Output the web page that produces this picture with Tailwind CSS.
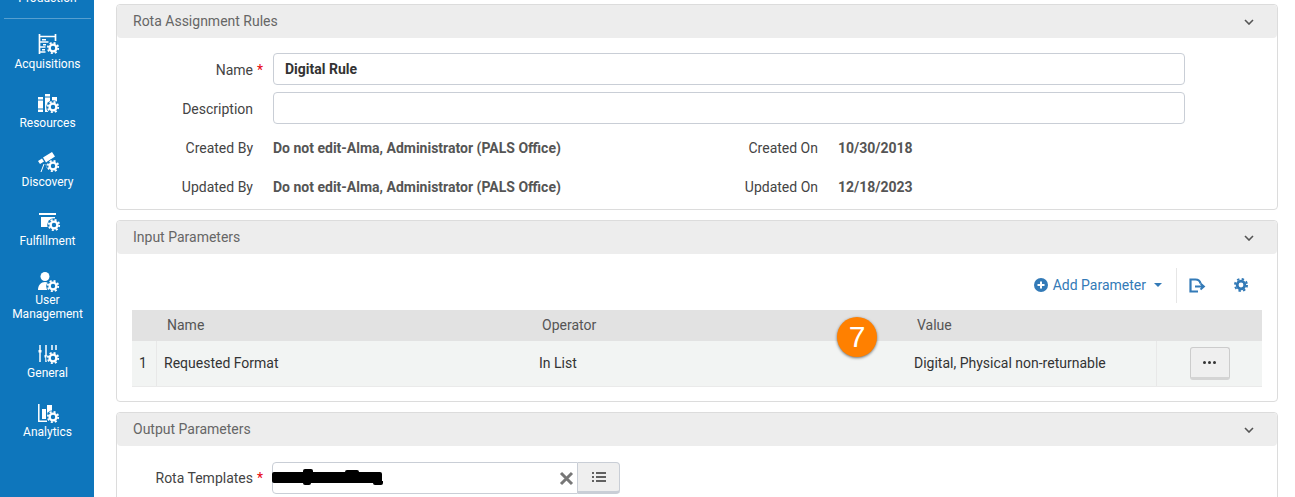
<!DOCTYPE html>
<html lang="en">
<head>
  <meta charset="UTF-8" />
  <meta name="viewport" content="width=device-width, initial-scale=1.0" />
  <title>Rota Assignment Rules</title>
  <script src="https://cdn.jsdelivr.net/npm/@tailwindcss/browser@4"></script>
</head>
<body class="bg-white text-[#333] font-['Roboto',sans-serif] text-[14px] overflow-hidden">

  <svg width="0" height="0" class="absolute">
    <defs>
      <g id="gear">
        <circle cx="15" cy="14" r="6.8" fill="#0e76bc" />
        <circle cx="15" cy="14" r="3.4" fill="none" stroke="#fff" stroke-width="2.4" />
        <circle cx="15" cy="14" r="5.2" fill="none" stroke="#fff" stroke-width="1.8" stroke-dasharray="2.04 2.04" />
      </g>
      <symbol id="chev" viewBox="0 0 10 6">
        <path d="M1 1l4 4 4-4" fill="none" stroke="#555" stroke-width="1.6" />
      </symbol>
    </defs>
  </svg>

  <div class="flex h-[497px] overflow-hidden">

    <!-- Sidebar -->
    <aside class="w-[94px] shrink-0 pl-[1px] bg-[#0e76bc] text-white text-[12px] leading-[14px] text-center overflow-hidden">
      <div class="mt-[-9px] h-[28px] border-b border-white/30 mx-[3px]">Production</div>

      <div class="h-[59px] mt-[15px] flex flex-col items-center">
        <div class="h-[20px] w-[20px]">
          <svg width="20" height="20" viewBox="0 0 20 20" class="overflow-visible">
            <path d="M1.500 0v20M17.500 0v7M1.500 2.500h16M1.500 8h9M1.500 13h6M1.500 18h6" stroke="#fff" stroke-width="1.700" fill="none" />
            <path d="M4 5h4v1.500H4zM5 10h3v1.500H5zM4 15h3v1.500H4z" fill="#fff" />
            <use href="#gear" />
          </svg>
        </div>
        <span class="mt-[3px]">Acquisitions</span>
      </div>

      <div class="h-[59px] flex flex-col items-center">
        <div class="h-[20px] w-[20px]">
          <svg width="20" height="20" viewBox="0 0 20 20" class="mt-[1px] overflow-visible">
            <path d="M0 3h5v15H0zM7 0h5v18H7zM14 3h5v8h-5z" fill="#fff" />
            <path d="M0 6h5M0 15h5M7 3h5" stroke="#0e76bc" stroke-width="1" />
            <use href="#gear" x="0" y="-1" />
          </svg>
        </div>
        <span class="mt-[3px]">Resources</span>
      </div>

      <div class="h-[59px] flex flex-col items-center">
        <div class="h-[20px] w-[20px]">
          <svg width="20" height="20" viewBox="0 0 20 20" class="overflow-visible">
            <path d="M0 9l4-2.500 2 3-4 2.500zM5 5.500l9-5.500 3 4.500-9 6z" fill="#fff" />
            <path d="M6 12L3 20M8 12l1 4" stroke="#fff" stroke-width="1" />
            <use href="#gear" x="0" y="0" />
          </svg>
        </div>
        <span class="mt-[3px]">Discovery</span>
      </div>

      <div class="h-[59px] flex flex-col items-center">
        <div class="h-[20px] w-[20px]">
          <svg width="20" height="20" viewBox="0 0 20 20" class="mt-[2px] overflow-visible">
            <path d="M1 1h17" stroke="#fff" stroke-width="2" />
            <path d="M3 4h14v10H3z" fill="#fff" />
            <use href="#gear" x="1" y="-2" />
          </svg>
        </div>
        <span class="mt-[3px]">Fulfillment</span>
      </div>

      <div class="h-[73px] flex flex-col items-center">
        <div class="h-[20px] w-[20px]">
          <svg width="20" height="21" viewBox="0 0 20 21" class="mt-[2px] overflow-visible">
            <circle cx="7" cy="4.500" r="4.500" fill="#fff" />
            <path d="M0 18c0-5 3-8 7-8s7 3 7 8z" fill="#fff" />
            <use href="#gear" x="0" y="0" />
          </svg>
        </div>
        <span class="mt-[3px]">User<br />Management</span>
      </div>

      <div class="h-[59px] flex flex-col items-center">
        <div class="h-[20px] w-[20px]">
          <svg width="20" height="20" viewBox="0 0 20 20" class="mt-[2px] overflow-visible">
            <path d="M2 0v17M8 0v17M14 0v5M18 0v5" stroke="#fff" stroke-width="1.500" />
            <path d="M.5 5h3v2.500h-3zM6.500 10h3v2.500h-3z" fill="#fff" />
            <use href="#gear" x="0" y="-1" />
          </svg>
        </div>
        <span class="mt-[3px]">General</span>
      </div>

      <div class="h-[59px] flex flex-col items-center">
        <div class="h-[20px] w-[20px]">
          <svg width="20" height="20" viewBox="0 0 20 20" class="mt-[2px] overflow-visible">
            <path d="M.8 0v17.200H9" fill="none" stroke="#fff" stroke-width="1.500" />
            <path d="M4 5h4v10H4zM9 1h5v9H9z" fill="#fff" />
            <use href="#gear" x="0" y="-1" />
          </svg>
        </div>
        <span class="mt-[3px]">Analytics</span>
      </div>
    </aside>

    <!-- Main -->
    <main class="w-[1162px] ml-[22px] pt-[4px] flex flex-col gap-[10px]">

      <!-- Rota Assignment Rules -->
      <section class="h-[206px] shrink-0 border border-[#dcdcdc] rounded-[4px]">
        <div class="h-[33px] bg-[#ededed] rounded-[4px] flex items-center justify-between pl-[16px] pr-[23px] text-[#666]">
          <span>Rota Assignment Rules</span>
          <svg width="10" height="6"><use href="#chev" /></svg>
        </div>
        <div class="pt-[15px]">
          <div class="flex items-center h-[32px]">
            <label class="w-[136px] pt-[2px] text-right text-[#444] relative">Name <span class="absolute left-[140px] text-red-600">*</span></label>
            <div class="ml-[20px] w-[912px] h-[32px] border border-[#c9ced6] rounded-[4px] px-[11px] flex items-center font-bold">Digital Rule</div>
          </div>
          <div class="flex items-center h-[32px] mt-[7px]">
            <label class="w-[136px] pt-[2px] text-right text-[#444]">Description</label>
            <div class="ml-[20px] w-[912px] h-[32px] border border-[#c9ced6] rounded-[4px]"></div>
          </div>
          <div class="flex items-center h-[20px] mt-[14px] text-[#444]">
            <span class="w-[136px] text-right">Created By</span>
            <span class="ml-[20px] w-[476px] font-bold text-[#555]">Do not edit-Alma, Administrator (PALS Office)</span>
            <span class="w-[69px] flex justify-end whitespace-nowrap">Created On</span>
            <span class="ml-[20px] font-bold text-[#555]">10/30/2018</span>
          </div>
          <div class="flex items-center h-[20px] mt-[19px] text-[#444]">
            <span class="w-[136px] text-right">Updated By</span>
            <span class="ml-[20px] w-[476px] font-bold text-[#555]">Do not edit-Alma, Administrator (PALS Office)</span>
            <span class="w-[69px] flex justify-end whitespace-nowrap">Updated On</span>
            <span class="ml-[20px] font-bold text-[#555]">12/18/2023</span>
          </div>
        </div>
      </section>

      <!-- Input Parameters -->
      <section class="h-[182px] shrink-0 border border-[#dcdcdc] rounded-[4px] relative">
        <div class="h-[33px] bg-[#ededed] rounded-[4px] flex items-center justify-between pl-[16px] pr-[23px] text-[#666]">
          <span>Input Parameters</span>
          <svg width="10" height="6"><use href="#chev" /></svg>
        </div>

        <div class="h-[56px] pt-[6px] flex items-center justify-end pr-[29px] text-[#337ab7]">
          <svg width="14" height="14" viewBox="0 0 14 14">
            <circle cx="7" cy="7" r="7" fill="#337ab7" />
            <path d="M7 3.500v7M3.500 7h7" stroke="#fff" stroke-width="2" />
          </svg>
          <span class="ml-[5px]">Add Parameter</span>
          <span class="ml-[8px] w-0 h-0 border-x-[4px] border-x-transparent border-t-[4px] border-t-[#337ab7]"></span>
          <span class="ml-[14px] w-px h-[35px] bg-[#e6e6e6]"></span>
          <svg width="17" height="15" viewBox="0 0 17 15" class="ml-[12px]">
            <path d="M9 13.500H1.500V1.500h5c3 0 4.500 1.500 5 4" fill="none" stroke="#337ab7" stroke-width="2.200" />
            <path d="M6 8.500h8M11.500 5.500l3.500 3-3.500 3" fill="none" stroke="#337ab7" stroke-width="1.800" />
          </svg>
          <svg width="14" height="14" viewBox="0 0 14 14" class="ml-[28px]">
            <circle cx="7" cy="7" r="3.800" fill="none" stroke="#337ab7" stroke-width="2.800" />
            <circle cx="7" cy="7" r="6" fill="none" stroke="#337ab7" stroke-width="2" stroke-dasharray="2.360 2.350" />
          </svg>
        </div>

        <div class="ml-[15px] w-[1130px]">
          <div class="grid grid-cols-[25px_375px_375px_240px_115px] h-[31px] items-center bg-[#e2e2e2] text-[#555]">
            <span></span>
            <span class="pl-[10px]">Name</span>
            <span class="pl-[10px]">Operator</span>
            <span class="pl-[10px]">Value</span>
            <span></span>
          </div>
          <div class="grid grid-cols-[25px_375px_375px_250px_105px] h-[46px] items-center bg-[#f2f4f3] text-[#333] border-b border-[#eaeaea]">
            <span class="pl-[7px] h-full flex items-center border-r border-[#e8e8e8]">1</span>
            <span class="pl-[7px]">Requested Format</span>
            <span class="pl-[7px]">In List</span>
            <span class="pl-[7px] whitespace-nowrap h-full flex items-center border-r border-[#e8e8e8]">Digital, Physical non-returnable</span>
            <span class="flex justify-center h-full items-center">
              <span class="w-[40px] h-[33px] bg-[#efefef] border border-[#ccc] border-b-[3px] border-b-[#d4d4d4] rounded-[3px] flex items-center justify-center gap-[2px]">
                <i class="w-[3px] h-[3px] rounded-full bg-[#333]"></i>
                <i class="w-[3px] h-[3px] rounded-full bg-[#333]"></i>
                <i class="w-[3px] h-[3px] rounded-full bg-[#333]"></i>
              </span>
            </span>
          </div>
        </div>

        <!-- Step badge -->
        <div class="absolute left-[720px] top-[96px] w-[40px] h-[40px] rounded-full bg-[#ff8000] shadow-[0_1px_3px_rgba(0,0,0,0.55)] text-white font-['Liberation_Sans',sans-serif] text-[30px] leading-[38px] flex items-center justify-center">7</div>
      </section>

      <!-- Output Parameters -->
      <section class="h-[110px] shrink-0 border border-[#dcdcdc] rounded-[4px]">
        <div class="h-[33px] bg-[#ededed] rounded-[4px] flex items-center justify-between pl-[16px] pr-[23px] text-[#666]">
          <span>Output Parameters</span>
          <svg width="10" height="6"><use href="#chev" /></svg>
        </div>
        <div class="pt-[16px] flex items-start">
          <label class="w-[136px] h-[32px] flex items-center justify-end text-[#444] relative">Rota Templates <span class="absolute left-[140px] text-red-600">*</span></label>
          <div class="ml-[19px] w-[306px] h-[32px] border border-[#c9ced6] rounded-l-[4px] relative flex items-center justify-end pr-[3px]">
            <span class="absolute left-[-1px] top-[9px] w-[110px] h-[11px] bg-black rounded-[2px]"></span>
            <span class="absolute left-[30px] top-[6px] w-[10px] h-[5px] bg-black rounded-t-[2px]"></span>
            <span class="absolute left-[30px] top-[18px] w-[8px] h-[4px] bg-black rounded-b-[2px]"></span>
            <span class="absolute left-[72px] top-[7px] w-[14px] h-[4px] bg-black rounded-t-[2px]"></span>
            <span class="absolute left-[100px] top-[18px] w-[10px] h-[4px] bg-black rounded-b-[2px]"></span>
            <svg width="15" height="15" viewBox="0 0 15 15">
              <path d="M2 2l11 11M13 2L2 13" stroke="#777" stroke-width="3" />
            </svg>
          </div>
          <div class="w-[42px] h-[32px] bg-[#efefef] border border-[#c9ced6] border-l-0 border-b-[3px] rounded-r-[4px] flex items-center justify-center">
            <svg width="14" height="10" viewBox="0 0 14 10">
              <path d="M0 1h2M4 1h10M0 5h2M4 5h10M0 9h2M4 9h10" stroke="#333" stroke-width="1.700" />
            </svg>
          </div>
        </div>
      </section>
    </main>
  </div>

</body>
</html>
